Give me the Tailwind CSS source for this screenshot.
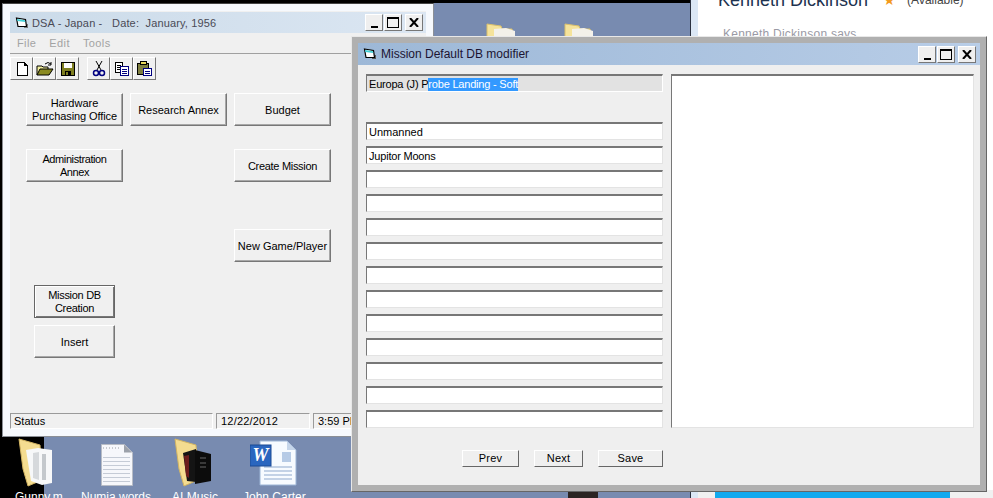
<!DOCTYPE html>
<html lang="en">
<head>
    <meta charset="UTF-8">
    <title>DSA - Japan</title>
    <script src="https://cdn.jsdelivr.net/npm/@tailwindcss/browser@4"></script>
</head>
<body class="bg-black">
<div class="relative w-[993px] h-[498px] overflow-hidden bg-[#788bb0] font-['Liberation_Sans',Arial,sans-serif] text-[11px] leading-[13px] text-black">

    <!-- desktop background pieces -->
    <div class="absolute left-0 top-0 w-[993px] h-[3px] bg-black"></div>
    <div class="absolute left-0 top-0 w-[44px] h-[498px] bg-black"></div>
    <div class="absolute left-[568px] top-[490px] w-[30px] h-[8px] bg-[#2b2422]"></div>

    <!-- chat window behind -->
    <div class="absolute left-[690px] top-0 w-[303px] h-[498px] bg-white border-l-[1px] border-[#2a3140] overflow-hidden">
        <div class="absolute left-0 top-0 w-[7px] h-full bg-[#dbe7f5]"></div>
        <div class="flex items-center absolute left-[27px] top-[-10px] text-[18px] leading-[20px] text-[#1e3350]">
            <span>Kenneth Dickinson</span>
            <span class="ml-[15px] text-[#f39a1e] text-[14px]">★</span>
            <span class="ml-[11px] text-[12px] text-[#444]">(Available)</span>
        </div>
        <div class="absolute left-[32px] top-[28px] text-[12px] tracking-[0.25px] text-[#9a9aa5] whitespace-nowrap">Kenneth Dickinson says</div>
        <div class="absolute left-[7px] top-[490px] w-[296px] h-[8px] bg-[#f1f1f1]"></div>
        <div class="absolute left-[24px] top-[490px] w-[235px] h-[8px] bg-[#12a9ee]"></div>
    </div>

    <!-- desktop folders above -->
    <svg class="absolute left-[486px] top-[22px]" width="36" height="16" viewBox="0 0 36 16"><path d="M1 16V2l14 2 1 3h10l2 9z" fill="#f5e39b" stroke="#d9bf6c"/><path d="M8 16V7l12-1 9 3v7z" fill="#f3f1ea"/></svg>
    <svg class="absolute left-[564px] top-[22px]" width="36" height="16" viewBox="0 0 36 16"><path d="M1 16V2l14 2 1 3h10l2 9z" fill="#f5e39b" stroke="#d9bf6c"/><path d="M8 16V7l12-1 9 3v7z" fill="#f3f1ea"/></svg>

    <!-- desktop icons bottom -->
    <svg class="absolute left-[18px] top-[438px]" width="38" height="50" viewBox="0 0 38 50"><path d="M1 1L22 7L24 42L10 48L5 31Z" fill="#f4dc90" stroke="#d3b563"/><path d="M8 12L20 10L34 12V45L24 47L13 43Z" fill="#f7f8f9"/><path d="M15 15L21 14V42L15 40Z" fill="#d6d9dc"/><path d="M24 16L28 16V42L24 42Z" fill="#c4c8cc"/></svg>
    <svg class="absolute left-[100px] top-[443px]" width="34" height="44" viewBox="0 0 34 44"><path d="M1.500 1.500h23l8 8v33h-31z" fill="#f6f7fb" stroke="#b7bcc6"/><path d="M24 1.500v8h8z" fill="#9ca1aa"/><path d="M3 5h18" stroke="#9a9ea6" stroke-dasharray="1 2"/><path d="M3 14.500h27M3 18.500h27M3 22.500h27M3 26.500h27M3 30.500h27M3 34.500h27M3 38.500h27" stroke="#c5cbd6"/></svg>
    <svg class="absolute left-[174px] top-[438px]" width="38" height="50" viewBox="0 0 38 50"><path d="M1 1L22 7L24 42L10 48L5 31Z" fill="#f4dc90" stroke="#d3b563"/><path d="M9 15L22 11V44L13 43Z" fill="#141414"/><path d="M10 18L15 17V40L12 38Z" fill="#6b1c1c"/><path d="M21 12L37 16V43L21 46Z" fill="#0c0c0c"/><path d="M26 20h6M26 25h6M26 29h6" stroke="#666"/></svg>
    <svg class="absolute left-[250px] top-[440px]" width="47" height="46" viewBox="0 0 47 46"><path d="M10 1h27l9 9v35H10z" fill="#f7fbff" stroke="#9cb5d6"/><path d="M37 1v9h9z" fill="#c6d6ea"/><path d="M32 12h9v10h-9z" fill="#b6cbe6"/><path d="M14 27h28M14 31h28M14 35h28M14 39h28" stroke="#8fa9cd"/><rect x="0" y="5" width="21" height="21" fill="#2a66bf" stroke="#1b4a94"/><text x="10.500" y="21" text-anchor="middle" font-family="Liberation Serif" font-weight="700" font-style="italic" font-size="18" fill="#fff">W</text></svg>
    <div class="absolute left-0 top-[491px] w-[320px] text-[12px] text-white">
        <span class="absolute left-[15px]">Gunny.m</span>
        <span class="absolute left-[81px] whitespace-nowrap">Numia words</span>
        <span class="absolute left-[172px] whitespace-nowrap">AI Music</span>
        <span class="absolute left-[243px] whitespace-nowrap">John Carter</span>
    </div>

    <!-- main window -->
    <div class="absolute left-[2px] top-[3px] w-[432px] h-[434px] bg-[#f0f0f0] border border-[#8b8f96] border-t-[#444] flex flex-col px-[7px] pt-[8px] pb-[7px] shadow-[inset_0_0_0_7px_#f6f9fd]">
        <div class="flex items-center h-[21px] shrink-0 pl-[5px] pr-[3px] bg-gradient-to-r from-[#cbdbe9] to-[#dbe6f2] text-[#4a4a55]">
            <svg width="13" height="12" viewBox="0 0 13 12" class="mr-[4px]"><path d="M1.500 1L10.500 2.500L11.500 9.500L3 9.500Z" fill="#fff" stroke="#000" stroke-width="1.200"/><path d="M2 2L10 3.300L10.300 5L2.300 4Z" fill="#3fd0d6"/><path d="M12 7h1v4H9v-1h3z" fill="#777"/></svg>
            <span class="whitespace-pre tracking-[0.15px] pt-[1px]">DSA - Japan -   Date:  January, 1956</span>
            <div class="ml-auto flex gap-[1px]">
                <div class="w-[18px] h-[17px] bg-[#efefef] border border-t-white border-l-white border-r-[#777] border-b-[#777] flex items-end justify-center pb-[2px]"><div class="w-[7px] h-[2px] bg-black"></div></div>
                <div class="w-[18px] h-[17px] bg-[#efefef] border border-t-white border-l-white border-r-[#777] border-b-[#777] flex items-center justify-center"><div class="w-[12px] h-[11px] border border-t-2 border-black"></div></div>
                <div class="ml-[2px] w-[18px] h-[17px] bg-[#efefef] border border-t-white border-l-white border-r-[#777] border-b-[#777] flex items-center justify-center"><svg width="10" height="9" viewBox="0 0 10 9"><path d="M1 0l8 9M9 0L1 9" stroke="#000" stroke-width="2"/></svg></div>
            </div>
        </div>
        <div class="flex items-center h-[21px] shrink-0 border-b border-[#a0a0a0] text-[#a3a3a3] pl-[7px] gap-[13px] tracking-[0.4px]">
            <span>File</span><span>Edit</span><span>Tools</span>
        </div>

        <!-- toolbar -->
        <div class="flex mt-[3px] h-[23px] shrink-0">
            <div class="w-[23px] h-[23px] flex items-center justify-center border border-t-white border-l-white border-r-[#777] border-b-[#777]"><svg width="16" height="16" viewBox="0 0 16 16" shape-rendering="crispEdges"><path d="M3 1.500h7l3 3v10H3z" fill="#fff" stroke="#000"/><path d="M10 1.500v3h3" fill="none" stroke="#000"/></svg></div>
            <div class="w-[23px] h-[23px] flex items-center justify-center border border-t-white border-l-white border-r-[#777] border-b-[#777]"><svg width="18" height="16" viewBox="0 0 18 16"><path d="M1 14V5h5l1 1h5v2" fill="#f2ef9c" stroke="#000"/><path d="M1 14l3-6h13l-4 6z" fill="#8a8a22" stroke="#000"/><path d="M9 3q3-3 6 0M15 1v3h-3" fill="none" stroke="#000"/></svg></div>
            <div class="w-[23px] h-[23px] flex items-center justify-center border border-t-white border-l-white border-r-[#777] border-b-[#777]"><svg width="16" height="16" viewBox="0 0 16 16" shape-rendering="crispEdges"><path d="M1 1h14v14H1z" fill="#000"/><path d="M2 2h12v12H2z" fill="#7f7f20"/><path d="M4 2h8v5H4z" fill="#fff"/><path d="M5 10h6v4H5z" fill="#000"/><path d="M6 11h2v3H6z" fill="#7f7f20"/></svg></div>
            <div class="ml-[8px] w-[23px] h-[23px] flex items-center justify-center border border-t-white border-l-white border-r-[#777] border-b-[#777]"><svg width="14" height="17" viewBox="0 0 14 17" fill="none"><path d="M4 1l5 9M10 1L5 10" stroke="#000"/><circle cx="4" cy="13" r="2.500" stroke="#000080" stroke-width="1.500"/><circle cx="10" cy="13" r="2.500" stroke="#000080" stroke-width="1.500"/></svg></div>
            <div class="w-[23px] h-[23px] flex items-center justify-center border border-t-white border-l-white border-r-[#777] border-b-[#777]"><svg width="16" height="16" viewBox="0 0 16 16" shape-rendering="crispEdges"><path d="M1.500 1.500h7v10h-7z" fill="#fff" stroke="#000"/><path d="M3 4h4M3 6h4M3 8h4" stroke="#000"/><path d="M6.500 5.500h8v9h-8z" fill="#fff" stroke="#000080"/><path d="M8 8h5M8 10h5M8 12h5" stroke="#000080"/></svg></div>
            <div class="w-[23px] h-[23px] flex items-center justify-center border border-t-white border-l-white border-r-[#777] border-b-[#777]"><svg width="17" height="17" viewBox="0 0 17 17" shape-rendering="crispEdges"><path d="M1.500 3.500h11v11h-11z" fill="#7f7f40" stroke="#000"/><path d="M4 1.500h6v3H4z" fill="#e8d85a" stroke="#000"/><path d="M7.500 8.500h8v7h-8z" fill="#fff" stroke="#000080"/><path d="M9 11h5M9 13h5" stroke="#000080"/></svg></div>
        </div>

        <!-- form buttons -->
        <div class="flex flex-col pl-[16px] mt-[13px]">
            <div class="flex gap-[7px]">
                <div class="w-[97px] h-[33px] pt-[1px] flex items-center justify-center text-center bg-[#f0f0f0] border border-t-white border-l-white border-r-[#777] border-b-[#777] shadow-[inset_-1px_-1px_0_#a8a8a8]"><span>Hardware<br><span class="tracking-[-0.1px]">Purchasing Office</span></span></div>
                <div class="w-[97px] h-[33px] pt-[1px] flex items-center justify-center text-center bg-[#f0f0f0] border border-t-white border-l-white border-r-[#777] border-b-[#777] shadow-[inset_-1px_-1px_0_#a8a8a8] whitespace-nowrap">Research Annex</div>
                <div class="w-[97px] h-[33px] pt-[1px] flex items-center justify-center text-center bg-[#f0f0f0] border border-t-white border-l-white border-r-[#777] border-b-[#777] shadow-[inset_-1px_-1px_0_#a8a8a8]">Budget</div>
            </div>
            <div class="flex gap-[111px] mt-[23px]">
                <div class="w-[97px] h-[33px] pt-[1px] flex items-center justify-center text-center bg-[#f0f0f0] border border-t-white border-l-white border-r-[#777] border-b-[#777] shadow-[inset_-1px_-1px_0_#a8a8a8] tracking-[-0.4px]"><span>Administration<br>Annex</span></div>
                <div class="w-[97px] h-[33px] pt-[1px] flex items-center justify-center text-center bg-[#f0f0f0] border border-t-white border-l-white border-r-[#777] border-b-[#777] shadow-[inset_-1px_-1px_0_#a8a8a8] tracking-[-0.3px] whitespace-nowrap">Create Mission</div>
            </div>
            <div class="ml-[208px] mt-[47px] w-[97px] h-[33px] pt-[1px] flex items-center justify-center text-center bg-[#f0f0f0] border border-t-white border-l-white border-r-[#777] border-b-[#777] shadow-[inset_-1px_-1px_0_#a8a8a8] whitespace-nowrap">New Game/Player</div>
            <div class="ml-[8px] mt-[23px] w-[81px] h-[33px] pt-[1px] flex items-center justify-center text-center bg-[#f0f0f0] border border-[#666] shadow-[inset_1px_1px_0_#fff,inset_-1px_-1px_0_#777] tracking-[-0.3px]"><span>Mission DB<br>Creation</span></div>
            <div class="ml-[8px] mt-[7px] w-[81px] h-[33px] pt-[1px] flex items-center justify-center text-center bg-[#f0f0f0] border border-t-white border-l-white border-r-[#777] border-b-[#777] shadow-[inset_-1px_-1px_0_#a8a8a8]">Insert</div>
        </div>

        <!-- status bar -->
        <div class="mt-auto flex gap-[3px] h-[16px] shrink-0">
            <div class="w-[203px] pl-[3px] flex items-center border border-t-[#9a9a9a] border-l-[#9a9a9a] border-r-white border-b-white">Status</div>
            <div class="w-[94px] pl-[4px] flex items-center border border-t-[#9a9a9a] border-l-[#9a9a9a] border-r-white border-b-white tracking-[0.2px]">12/22/2012</div>
            <div class="w-[60px] pl-[4px] flex items-center border border-t-[#9a9a9a] border-l-[#9a9a9a] border-r-white border-b-white">3:59 PM</div>
        </div>
    </div>

    <!-- mission window -->
    <div class="absolute left-[351px] top-[36px] w-[636px] h-[456px] bg-[#efefef] border border-t-[#e8e8e8] border-l-[#e8e8e8] border-r-[#666] border-b-[#666] flex flex-col shadow-[inset_0_0_0_6px_#b0b0b0]">
        <div class="mx-[6px] mt-[6px] flex items-center h-[22px] shrink-0 pl-[5px] pr-[4px] bg-gradient-to-r from-[#9db8d7] to-[#b8cde7] text-[12px] text-[#1c1432]">
            <svg width="13" height="12" viewBox="0 0 13 12" class="mr-[5px]"><path d="M1.500 1L10.500 2.500L11.500 9.500L3 9.500Z" fill="#fff" stroke="#000" stroke-width="1.200"/><path d="M2 2L10 3.300L10.300 5L2.300 4Z" fill="#3fd0d6"/><path d="M12 7h1v4H9v-1h3z" fill="#555"/></svg>
            <span class="pt-[1px]">Mission Default DB modifier</span>
            <div class="ml-auto flex gap-[1px]">
                <div class="w-[18px] h-[17px] bg-[#efefef] border border-t-white border-l-white border-r-[#777] border-b-[#777] flex items-end justify-center pb-[2px]"><div class="w-[7px] h-[2px] bg-black"></div></div>
                <div class="w-[18px] h-[17px] bg-[#efefef] border border-t-white border-l-white border-r-[#777] border-b-[#777] flex items-center justify-center"><div class="w-[12px] h-[11px] border border-t-2 border-black"></div></div>
                <div class="ml-[2px] w-[18px] h-[17px] bg-[#efefef] border border-t-white border-l-white border-r-[#777] border-b-[#777] flex items-center justify-center"><svg width="10" height="9" viewBox="0 0 10 9"><path d="M1 0l8 9M9 0L1 9" stroke="#000" stroke-width="2"/></svg></div>
            </div>
        </div>

        <div class="flex pl-[14px] pt-[9px] gap-[8px]">
            <div class="w-[297px] flex flex-col">
                <div class="h-[18px] flex items-center pl-[2px] pt-[1px] bg-[#e2e2e2] border border-t-2 border-t-[#777] border-l-[#777] border-r-white border-b-white tracking-[-0.2px]">Europa (J) P<span class="bg-[#3399ff] text-white">robe Landing - Soft</span></div>
                <div class="flex flex-col gap-[6px] mt-[30px]">
                    <div class="h-[18px] flex items-center pl-[2px] pt-[1px] bg-white border border-t-2 border-t-[#777] border-l-[#777] border-r-[#e3e3e3] border-b-[#e3e3e3]">Unmanned</div>
                    <div class="h-[18px] flex items-center pl-[2px] pt-[1px] bg-white border border-t-2 border-t-[#777] border-l-[#777] border-r-[#e3e3e3] border-b-[#e3e3e3] tracking-[-0.2px]">Jupitor Moons</div>
                    <div class="h-[18px] bg-white border border-t-2 border-t-[#777] border-l-[#777] border-r-[#e3e3e3] border-b-[#e3e3e3]"></div>
                    <div class="h-[18px] bg-white border border-t-2 border-t-[#777] border-l-[#777] border-r-[#e3e3e3] border-b-[#e3e3e3]"></div>
                    <div class="h-[18px] bg-white border border-t-2 border-t-[#777] border-l-[#777] border-r-[#e3e3e3] border-b-[#e3e3e3]"></div>
                    <div class="h-[18px] bg-white border border-t-2 border-t-[#777] border-l-[#777] border-r-[#e3e3e3] border-b-[#e3e3e3]"></div>
                    <div class="h-[18px] bg-white border border-t-2 border-t-[#777] border-l-[#777] border-r-[#e3e3e3] border-b-[#e3e3e3]"></div>
                    <div class="h-[18px] bg-white border border-t-2 border-t-[#777] border-l-[#777] border-r-[#e3e3e3] border-b-[#e3e3e3]"></div>
                    <div class="h-[18px] bg-white border border-t-2 border-t-[#777] border-l-[#777] border-r-[#e3e3e3] border-b-[#e3e3e3]"></div>
                    <div class="h-[18px] bg-white border border-t-2 border-t-[#777] border-l-[#777] border-r-[#e3e3e3] border-b-[#e3e3e3]"></div>
                    <div class="h-[18px] bg-white border border-t-2 border-t-[#777] border-l-[#777] border-r-[#e3e3e3] border-b-[#e3e3e3]"></div>
                    <div class="h-[18px] bg-white border border-t-2 border-t-[#777] border-l-[#777] border-r-[#e3e3e3] border-b-[#e3e3e3]"></div>
                    <div class="h-[18px] bg-white border border-t-2 border-t-[#777] border-l-[#777] border-r-[#e3e3e3] border-b-[#e3e3e3]"></div>
                </div>
                <div class="flex mt-[22px] pl-[96px]">
                    <div class="w-[57px] h-[17px] flex items-center justify-center border border-t-white border-l-white border-r-[#666] border-b-[#666] tracking-[0.2px]">Prev</div>
                    <div class="ml-[15px] w-[49px] h-[17px] flex items-center justify-center border border-t-white border-l-white border-r-[#666] border-b-[#666] tracking-[0.2px]">Next</div>
                    <div class="ml-[15px] w-[65px] h-[17px] flex items-center justify-center border border-t-white border-l-white border-r-[#666] border-b-[#666] tracking-[0.2px]">Save</div>
                </div>
            </div>
            <div class="w-[303px] h-[354px] bg-white border border-t-2 border-t-[#777] border-l-[#777] border-r-[#e3e3e3] border-b-[#e3e3e3]"></div>
        </div>
    </div>
</div>
</body>
</html>
